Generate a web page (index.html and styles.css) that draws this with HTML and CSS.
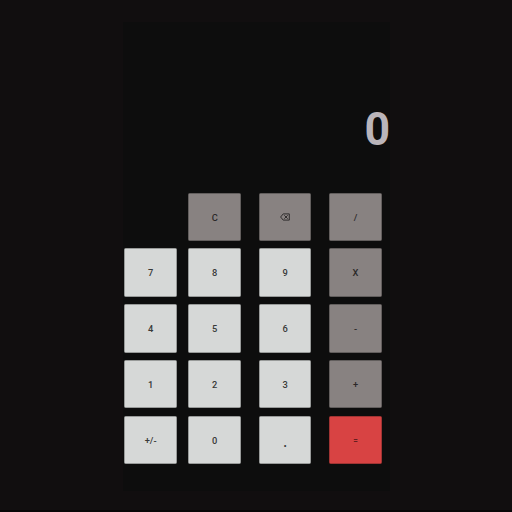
FILE: index.html
```html
<!DOCTYPE html>
<html lang="en">
<head>
<meta charset="utf-8">
<title>Calculator</title>
<link rel="stylesheet" href="styles.css">
</head>
<body>
<main class="calculator">
  <div class="display">0</div>
  <div class="keys">
    <button class="key function clear">C</button>
    <button class="key function" aria-label="Delete"><svg class="delete" viewBox="0 0 10 8"><path d="M3.2 .9H9.3V7.1H3.2L.6 4ZM4.3 2.3 7.7 5.7M7.7 2.3 4.3 5.7"/></svg></button>
    <button class="key function">/</button>
    <button class="key">7</button>
    <button class="key">8</button>
    <button class="key">9</button>
    <button class="key function">X</button>
    <button class="key">4</button>
    <button class="key">5</button>
    <button class="key">6</button>
    <button class="key function">-</button>
    <button class="key">1</button>
    <button class="key">2</button>
    <button class="key">3</button>
    <button class="key function">+</button>
    <button class="key">+/-</button>
    <button class="key">0</button>
    <button class="key point">.</button>
    <button class="key equals">=</button>
  </div>
</main>
</body>
</html>
```
FILE: styles.css
```css
* {
  box-sizing: border-box;
}

body {
  margin: 0;
  height: 512px;
  padding: 22px 122px 0 123px;
  overflow: hidden;
  background: #110e0f;
  border-bottom: 2px solid #080607;
  font-family: Roboto, sans-serif;
}

.calculator {
  height: 469px;
  background: #0d0d0d;
}

.display {
  height: 170.6px;
  padding-top: 79px;
  color: #bab5ba;
  font-size: 47px;
  font-weight: 700;
  line-height: 56px;
  text-align: right;
  transform: scaleX(.95);
  transform-origin: right;
}

.keys {
  display: grid;
  grid-template-columns: 64px 70.4px 70.4px 52.6px;
  grid-auto-rows: 48.4px;
  row-gap: 7.4px;
  padding-left: 1.4px;
}

.key {
  display: flex;
  align-items: center;
  justify-content: center;
  width: 52.6px;
  height: 48.4px;
  padding: .6px 0 0;
  border: 1px solid #989a99;
  border-radius: 1.5px;
  background: #d6d8d7;
  color: #383938;
  font: 500 9.3px Roboto, sans-serif;
}

.function {
  border-color: #625e5d;
  background: #888281;
  color: #2b2929;
}

.clear {
  grid-column: 2;
}

.point {
  padding-top: 4px;
  font-size: 14px;
}

.equals {
  border-color: #a03433;
  background: #d84343;
  color: #651f20;
  font-weight: 700;
  font-size: 8px;
}

.delete {
  width: 10px;
  height: 8px;
  fill: none;
  stroke: #2b2929;
  stroke-width: .95;
}
```
